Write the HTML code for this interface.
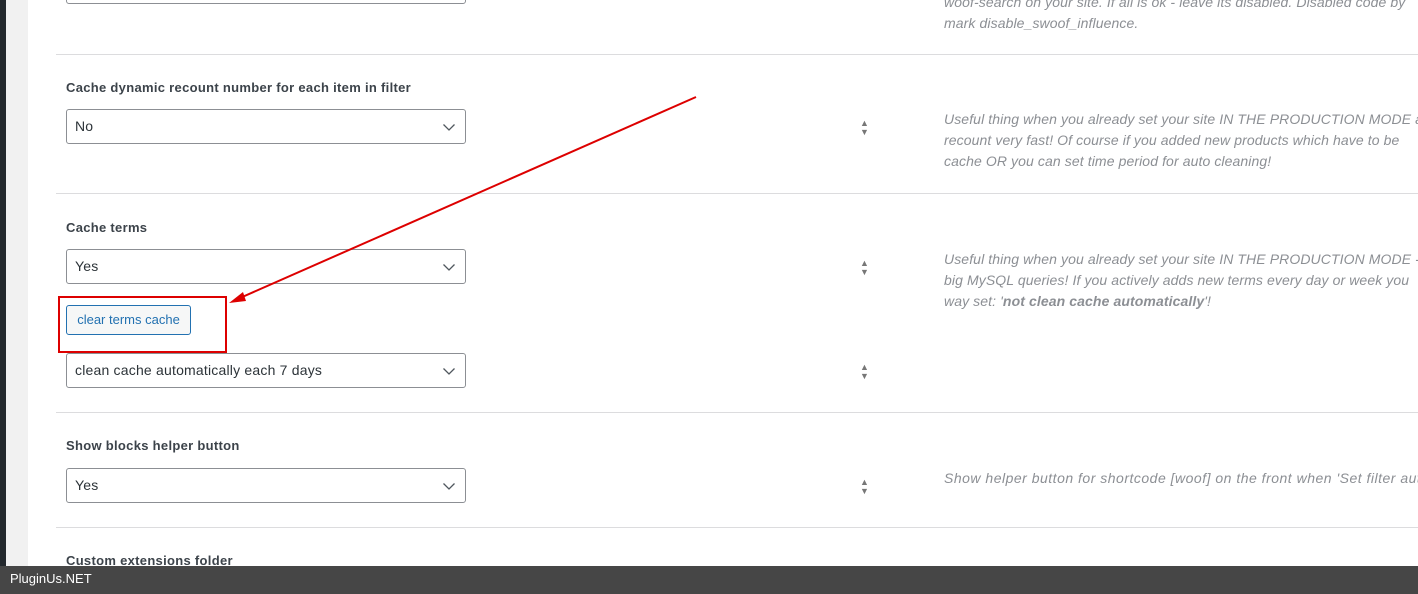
<!DOCTYPE html>
<html><head><style>
body{margin:0;width:1418px;height:594px;overflow:hidden;position:relative;background:#fff;font-family:"Liberation Sans",sans-serif;}
.a{position:absolute}
.lbl{position:absolute;left:66px;font-size:13px;font-weight:bold;color:#3c434a;letter-spacing:0.3px}
.sel{position:absolute;left:66px;width:398px;height:33px;border:1px solid #8c8f94;border-radius:3px;font-size:14px;color:#2c3338;line-height:33px;box-sizing:content-box}
.sel span{padding-left:8px;letter-spacing:0.2px}
.sel svg{position:absolute;right:9px;top:13px}
.hr{position:absolute;left:56px;right:0;height:1px;background:#dcdcde}
.d{position:absolute;left:944px;font-size:14px;font-style:italic;color:#8c8f94;line-height:21px;white-space:nowrap;letter-spacing:0.1px}
.ud{position:absolute;left:860px;font-size:9px;color:#777;line-height:9px}
</style></head><body>
<div class="a" style="left:0;top:0;width:6px;height:594px;background:#23282d"></div>
<div class="a" style="left:6px;top:0;width:22px;height:594px;background:#f1f1f1"></div>
<div class="sel" style="top:-31px"></div>
<div class="d" style="top:-8px">woof-search on your site. If all is ok - leave its disabled. Disabled code by<br>mark disable_swoof_influence.</div>
<div class="hr" style="top:54px"></div>
<div class="lbl" style="top:80px">Cache dynamic recount number for each item in filter</div>
<div class="sel" style="top:109px"><span>No</span><svg width="14" height="9"><path d="M1.5 1.5l5.5 5.5 5.5-5.5" stroke="#50575e" stroke-width="1.3" fill="none"/></svg></div>
<div class="ud" style="top:119px">▲<br>▼</div>
<div class="d" style="top:109px">Useful thing when you already set your site IN THE PRODUCTION MODE a<br>recount very fast! Of course if you added new products which have to be<br>cache OR you can set time period for auto cleaning!</div>
<div class="hr" style="top:193px"></div>
<div class="lbl" style="top:220px">Cache terms</div>
<div class="sel" style="top:249px"><span>Yes</span><svg width="14" height="9"><path d="M1.5 1.5l5.5 5.5 5.5-5.5" stroke="#50575e" stroke-width="1.3" fill="none"/></svg></div>
<div class="ud" style="top:259px">▲<br>▼</div>
<div class="d" style="top:249px">Useful thing when you already set your site IN THE PRODUCTION MODE -<br>big MySQL queries! If you actively adds new terms every day or week you<br>way set: '<b>not clean cache automatically</b>'!</div>
<div class="a" style="left:66px;top:305px;width:123px;height:28px;border:1px solid #2271b1;border-radius:3px;background:#f6f7f7;color:#2271b1;font-size:13px;line-height:28px;text-align:center">clear terms cache</div>
<div class="a" style="left:58px;top:296px;width:165px;height:53px;border:2px solid #d00"></div>
<svg class="a" style="left:0;top:0" width="1418" height="594"><path d="M696 97L240 298" stroke="#d00" stroke-width="2"/><path d="M229 303l14-11 3 9z" fill="#d00"/></svg>
<div class="sel" style="top:353px"><span>clean cache automatically each 7 days</span><svg width="14" height="9"><path d="M1.5 1.5l5.5 5.5 5.5-5.5" stroke="#50575e" stroke-width="1.3" fill="none"/></svg></div>
<div class="ud" style="top:363px">▲<br>▼</div>
<div class="hr" style="top:412px"></div>
<div class="lbl" style="top:438px">Show blocks helper button</div>
<div class="sel" style="top:468px"><span>Yes</span><svg width="14" height="9"><path d="M1.5 1.5l5.5 5.5 5.5-5.5" stroke="#50575e" stroke-width="1.3" fill="none"/></svg></div>
<div class="ud" style="top:478px">▲<br>▼</div>
<div class="d" style="top:468px;letter-spacing:0.5px">Show helper button for shortcode [woof] on the front when 'Set filter aut</div>
<div class="hr" style="top:527px"></div>
<div class="lbl" style="top:553px">Custom extensions folder</div>
<div class="a" style="left:0;top:566px;width:1418px;height:28px;background:#464646;color:#fff;font-size:13px;line-height:26px;padding-left:10px">PluginUs.NET</div>
</body></html>
